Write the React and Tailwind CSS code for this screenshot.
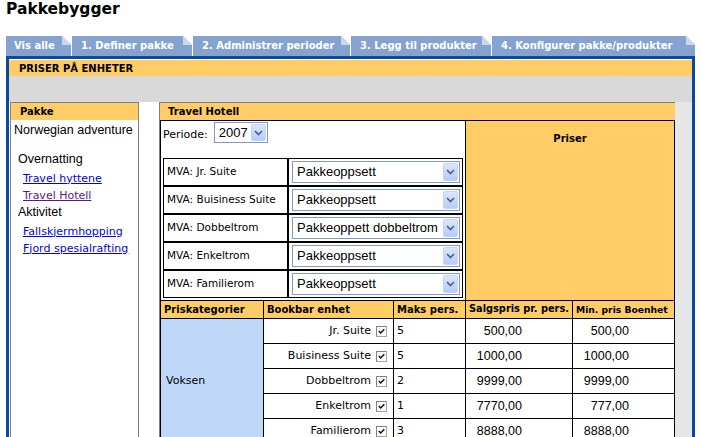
import React from "react";

const tabs = [
  { label: "Vis alle", w: "w-[65px]", pl: "pl-[8px]" },
  { label: "1. Definer pakke", w: "w-[120px]", pl: "pl-[9px]" },
  { label: "2. Administrer perioder", w: "w-[157px]", pl: "pl-[9px]" },
  { label: "3. Legg til produkter", w: "w-[140px]", pl: "pl-[9px]" },
  { label: "4. Konfigurer pakke/produkter", w: "w-[203px]", pl: "pl-[9px]" },
];

const mva = [
  ["Jr. Suite", "Pakkeoppsett"],
  ["Buisiness Suite", "Pakkeoppsett"],
  ["Dobbeltrom", "Pakkeoppett dobbeltrom"],
  ["Enkeltrom", "Pakkeoppsett"],
  ["Familierom", "Pakkeoppsett"],
];

const rooms = [
  { name: "Jr. Suite", maks: 5, pris: "500,00", min: "500,00" },
  { name: "Buisiness Suite", maks: 5, pris: "1000,00", min: "1000,00" },
  { name: "Dobbeltrom", maks: 2, pris: "9999,00", min: "9999,00" },
  { name: "Enkeltrom", maks: 1, pris: "7770,00", min: "777,00" },
  { name: "Familierom", maks: 3, pris: "8888,00", min: "8888,00" },
];

const headers = [
  { label: "Priskategorier", size: "text-[10px]" },
  { label: "Bookbar enhet", size: "text-[10px]" },
  { label: "Maks pers.", size: "text-[10px]" },
  { label: "Salgspris pr. pers.", size: "text-[9.8px]" },
  { label: "Min. pris Boenhet", size: "text-[9.2px]" },
];

const Arrow = ({ h = "h-[18px]" }) => (
  <div
    className={`w-[15px] ${h} flex items-center justify-center rounded-[2px] border border-[#c3d3fd] bg-gradient-to-b from-[#dbe6fe] to-[#b6cbf7]`}
  >
    <svg width="9" height="6" viewBox="0 0 9 6">
      <path d="M1 1l3.5 3.5L8 1" stroke="#4d6185" strokeWidth="1.7" fill="none" />
    </svg>
  </div>
);

const Select = ({ value, w, h, arrowH }) => (
  <div
    className={`${w} ${h} flex items-center justify-between border border-[#7f9db9] bg-white pl-[4px] pr-[1px] font-['Liberation_Sans',Arial,sans-serif] text-[13px] text-black`}
  >
    <span className="whitespace-nowrap">{value}</span>
    <Arrow h={arrowH} />
  </div>
);

const Check = () => (
  <svg width="11" height="11" viewBox="0 0 11 11" className="shrink-0">
    <rect x="0.5" y="0.5" width="10" height="10" fill="#fbfbf8" stroke="#a6a6a6" />
    <path d="M0.5 10.5V0.5h10" stroke="#808080" fill="none" />
    <path d="M2.8 5l1.9 2L8.3 3.2" stroke="#111" strokeWidth="1.5" fill="none" />
  </svg>
);

const Tab = ({ label, w, pl }) => (
  <div
    className={`relative ${w} ${pl} h-full flex items-center pb-[2px] bg-[#85a3ce] text-[10px] font-bold text-white whitespace-nowrap`}
  >
    {label}
    <svg width="9" height="9" viewBox="0 0 9 9" className="absolute right-0 top-0">
      <polygon points="0,0 9,0 9,9" fill="#fff" />
      <polygon points="0,0 9,9 0,9" fill="#cbd7eb" />
    </svg>
  </div>
);

export default function App() {
  return (
    <div className="w-[701px] h-[437px] overflow-hidden bg-white font-['DejaVu_Sans',Verdana,sans-serif] text-black">
      <h1 className="h-[18px] pl-[6px] text-[15.5px] font-bold leading-[18px]">
        Pakkebygger
      </h1>

      <div className="mt-[18px] flex h-[20px] gap-px pl-[6px]">
        {tabs.map((t) => (
          <Tab key={t.label} {...t} />
        ))}
      </div>

      <div className="ml-[6px] w-[689px] border-x-[3px] border-t-[3px] border-[#0a4a9e]">
        <div className="mt-px flex h-[16px] items-center bg-[#ffcc66] pl-[10px] text-[10px] font-bold">
          PRISER PÅ ENHETER
        </div>
        <div className="h-[26px] bg-[#d9d9d9]" />

        <div className="flex">
          {/* venstre meny */}
          <div className="ml-px w-[129px] shrink-0 border border-[#808080]">
            <div className="flex h-[17px] items-center bg-[#ffcc66] pl-[9px] text-[10px] font-bold">
              Pakke
            </div>
            <div className="font-['Liberation_Sans',Arial,sans-serif] text-[12.5px] leading-[17px]">
              <div className="mt-[1.5px] pl-[3px]">Norwegian adventure</div>
              <div className="mt-[12px] pl-[7px]">Overnatting</div>
            </div>
            <div className="mt-[2px] pl-[12px] text-[11px] leading-[17px]">
              <a href="#" className="block w-fit text-[#0000ee] underline">
                Travel hyttene
              </a>
              <a href="#" className="block w-fit text-[#551a8b] underline">
                Travel Hotell
              </a>
            </div>
            <div className="pl-[7px] font-['Liberation_Sans',Arial,sans-serif] text-[12.5px] leading-[17px]">
              Aktivitet
            </div>
            <div className="mt-[2px] pl-[12px] text-[11px] leading-[17px]">
              <a href="#" className="block w-fit text-[#0000ee] underline">
                Fallskjermhopping
              </a>
              <a href="#" className="block w-fit text-[#0000ee] underline">
                Fjord spesialrafting
              </a>
            </div>
          </div>

          {/* innhold */}
          <div className="ml-[20px] w-[516px] shrink-0 border-l border-t border-[#808080]">
            <div className="flex h-[17px] items-center bg-[#ffcc66] pl-[8px] text-[10px] font-bold">
              Travel Hotell
            </div>
            <table className="w-[514px] table-fixed border-collapse">
              <colgroup>
                <col className="w-[103px]" />
                <col className="w-[130px]" />
                <col className="w-[72px]" />
                <col className="w-[107px]" />
                <col className="w-[102px]" />
              </colgroup>
              <tbody>
                <tr>
                  <td colSpan={3} className="border border-black bg-white p-0 align-top">
                    <div className="h-[179px] pl-[2px] pt-px">
                      <div className="flex h-[21px] items-center gap-[6px]">
                        <span className="pt-[5px] text-[11px]">Periode:</span>
                        <Select value="2007" w="w-[54px]" h="h-[21px]" arrowH="h-[17px]" />
                      </div>
                      <div className="mt-[15px] grid w-[300px] grid-cols-[123px_173px] gap-[2px] bg-black p-px">
                        {mva.map(([label, val]) => (
                          <React.Fragment key={label}>
                            <div className="flex h-[26px] items-center bg-white pl-[3px] text-[10.5px] whitespace-nowrap">
                              MVA: {label}
                            </div>
                            <div className="flex h-[26px] items-center bg-white pl-[3px]">
                              <Select value={val} w="w-[168px]" h="h-[22px]" arrowH="h-[18px]" />
                            </div>
                          </React.Fragment>
                        ))}
                      </div>
                    </div>
                  </td>
                  <td colSpan={2} className="border border-black bg-[#ffcc66] p-0 align-top">
                    <div className="pt-[10px] text-center text-[10px] font-bold">Priser</div>
                  </td>
                </tr>
                <tr className="bg-[#ffcc66]">
                  {headers.map((h) => (
                    <td key={h.label} className="border border-black p-0">
                      <div
                        className={`flex h-[17px] items-center pl-[3px] ${h.size} font-bold whitespace-nowrap`}
                      >
                        {h.label}
                      </div>
                    </td>
                  ))}
                </tr>
                {rooms.map((r, i) => (
                  <tr key={r.name}>
                    {i === 0 && (
                      <td rowSpan={5} className="border border-black bg-[#c0d8f8] p-0 align-middle">
                        <div className="pl-[5px] text-[11px]">Voksen</div>
                      </td>
                    )}
                    <td className="border border-black p-0">
                      <div className="flex h-[24px] items-center justify-end gap-[5px] pr-[6px] text-[11px] whitespace-nowrap">
                        {r.name}
                        <Check />
                      </div>
                    </td>
                    <td className="border border-black p-0">
                      <div className="flex h-[24px] items-center pl-[3px] text-[11px]">{r.maks}</div>
                    </td>
                    <td className="border border-black p-0">
                      <div className="flex h-[24px] items-center font-['Liberation_Sans',Arial,sans-serif] text-[12.5px]">
                        <span className="ml-[4px] inline-block w-[52px] text-right">{r.pris}</span>
                      </div>
                    </td>
                    <td className="border border-black p-0">
                      <div className="flex h-[24px] items-center font-['Liberation_Sans',Arial,sans-serif] text-[12.5px]">
                        <span className="ml-[4px] inline-block w-[52px] text-right">{r.min}</span>
                      </div>
                    </td>
                  </tr>
                ))}
              </tbody>
            </table>
          </div>

          <div className="flex-1 bg-[#e6e6e6]" />
        </div>
      </div>
    </div>
  );
}
